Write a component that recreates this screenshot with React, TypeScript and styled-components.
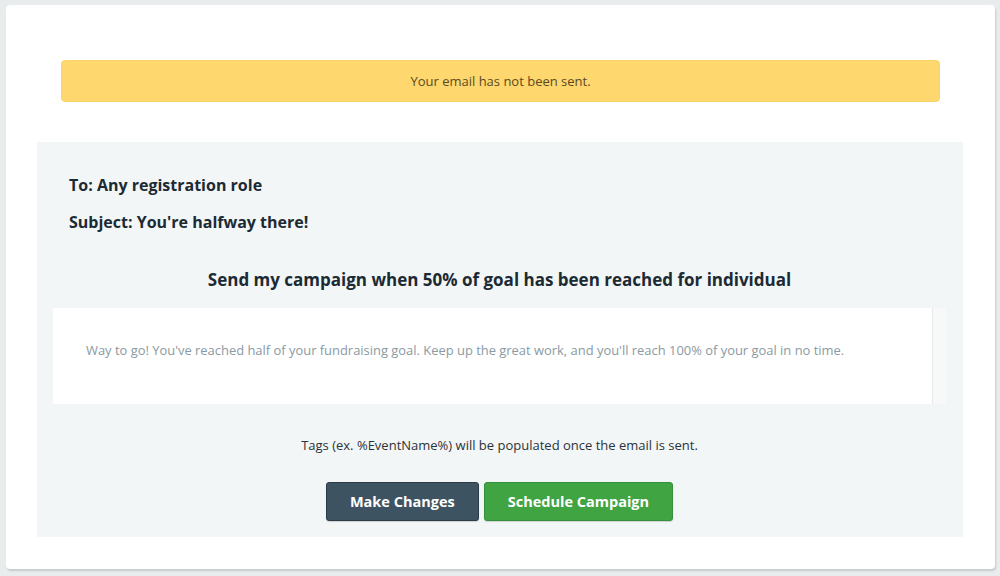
import styled, { createGlobalStyle } from 'styled-components';

const Global = createGlobalStyle`
  html, body {
    margin: 0;
    padding: 0;
    background: #e8eced;
    font-family: "Open Sans", Lato, Arial, sans-serif;
  }
`;

const Page = styled.div`
  padding: 5px 5px 7px 6px;
`;
const Card = styled.div`
  background: #ffffff;
  border-radius: 4px;
  box-shadow: 1px 2px 2px rgba(0, 0, 0, 0.14);
  padding: 55px 32px 32px 31px;
  height: 564px;
  box-sizing: border-box;
`;
const Banner = styled.div`
  margin: 0 23px 40px 24px;
  height: 42px;
  background: #fed76e;
  border: 1px solid #fcd367;
  border-radius: 4px;
  box-sizing: border-box;
  display: flex;
  align-items: center;
  justify-content: center;
  color: #5b4a1f;
  font-size: 13px;
`;
const Panel = styled.div`
  background: #f3f6f7;
  padding: 33px 17px 16px 16px;
  color: #1c2a33;
`;
const Recipients = styled.div`
  display: flex;
  flex-direction: column;
  gap: 17px;
  padding-left: 16px;
`;
const Line = styled.div`
  font-weight: 700;
  font-size: 16px;
  line-height: 20px;
`;
const Heading = styled.div`
  font-weight: 700;
  font-size: 17px;
  line-height: 22px;
  text-align: center;
  margin: 37px 0 17px;
`;
const Message = styled.div`
  display: flex;
  height: 96px;
  background: #ffffff;
`;
const MessageText = styled.div`
  flex: 1;
  padding: 33px 33px;
  line-height: 18px;
  color: #8a9aa3;
  font-size: 12.93px;
`;
const Track = styled.div`
  width: 13px;
  background: #f7f8f8;
  border-left: 1px solid #e6e8e9;
`;
const Note = styled.div`
  text-align: center;
  font-size: 13px;
  line-height: 18px;
  color: #2b3338;
  margin: 32px 0 28px;
`;
const Actions = styled.div`
  display: flex;
  justify-content: center;
  gap: 5px;
`;
const Button = styled.button<{ $tone: 'dark' | 'green' }>`
  height: 39px;
  padding: 0 23px;
  border-radius: 3px;
  border: 1px solid ${(p) => (p.$tone === 'dark' ? '#2b3b47' : '#34903a')};
  background: ${(p) => (p.$tone === 'dark' ? '#3e5362' : '#40a442')};
  color: #ffffff;
  font-family: inherit;
  font-weight: 700;
  font-size: 14.5px;
  box-shadow: 0 1px 1px rgba(0, 0, 0, 0.15);
`;

export default function App() {
  return (
    <Page>
      <Global />
      <Card>
        <Banner>Your email has not been sent.</Banner>
        <Panel>
          <Recipients>
            <Line>To: Any registration role</Line>
            <Line>Subject: You're halfway there!</Line>
          </Recipients>
          <Heading>Send my campaign when 50% of goal has been reached for individual</Heading>
          <Message>
            <MessageText>
              Way to go! You've reached half of your fundraising goal. Keep up the great work, and you'll reach 100% of your goal in no time.
            </MessageText>
            <Track />
          </Message>
          <Note>Tags (ex. %EventName%) will be populated once the email is sent.</Note>
          <Actions>
            <Button $tone="dark">Make Changes</Button>
            <Button $tone="green">Schedule Campaign</Button>
          </Actions>
        </Panel>
      </Card>
    </Page>
  );
}
